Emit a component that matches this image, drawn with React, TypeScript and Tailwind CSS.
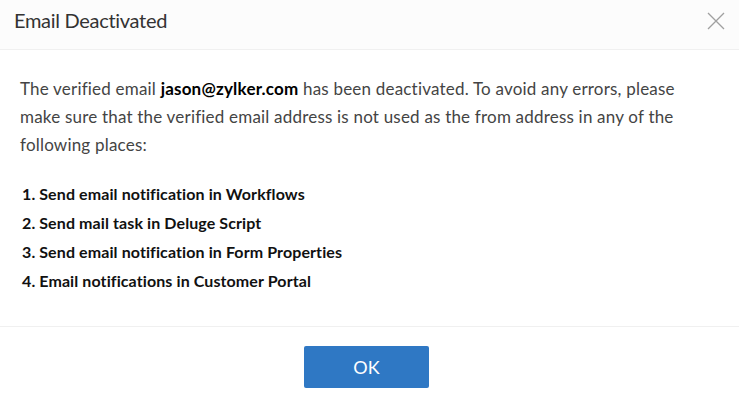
export default function App() {
  return (
    <div
      className="w-[739px] h-[405px] bg-white flex flex-col"
      style={{ fontFamily: "Lato, 'Open Sans', sans-serif" }}
    >
      <div className="h-[50px] shrink-0 bg-[#fcfcfc] border-b border-[#f0f0f0] flex items-start justify-between pl-[14px] pr-[14px] pt-[6px]">
        <h1 className="text-[20px] leading-[28px] text-[#333] tracking-[-0.3px]">Email Deactivated</h1>
        <svg width="18" height="18" viewBox="0 0 18 18" className="text-[#a0a0a0] mt-[6px]">
          <path d="M1 1L17 17M17 1L1 17" stroke="currentColor" strokeWidth="1.3" fill="none" />
        </svg>
      </div>
      <div className="flex-1 px-[20px] pt-[25px]">
        <p className="text-[17px] leading-[28px] text-[#444] tracking-[0.2px] pr-[40px]">
          The verified email <span className="font-bold text-black">jason@zylker.com</span> has been deactivated. To avoid any errors, please make sure that the verified email address is not used as the from address in any of the following places:
        </p>
        <ol className="mt-[20px] pl-[2px] text-[16px] leading-[29px] font-bold text-[#111] tracking-[0.1px]">
          <li>1. Send email notification in Workflows</li>
          <li>2. Send mail task in Deluge Script</li>
          <li>3. Send email notification in Form Properties</li>
          <li>4. Email notifications in Customer Portal</li>
        </ol>
      </div>
      <div className="h-[79px] shrink-0 border-t border-[#f0f0f0] flex justify-center pt-[19px] pr-[6px]">
        <button className="w-[125px] h-[42px] rounded-[2px] bg-[#2f78c4] text-white text-[18px]">OK</button>
      </div>
    </div>
  );
}
